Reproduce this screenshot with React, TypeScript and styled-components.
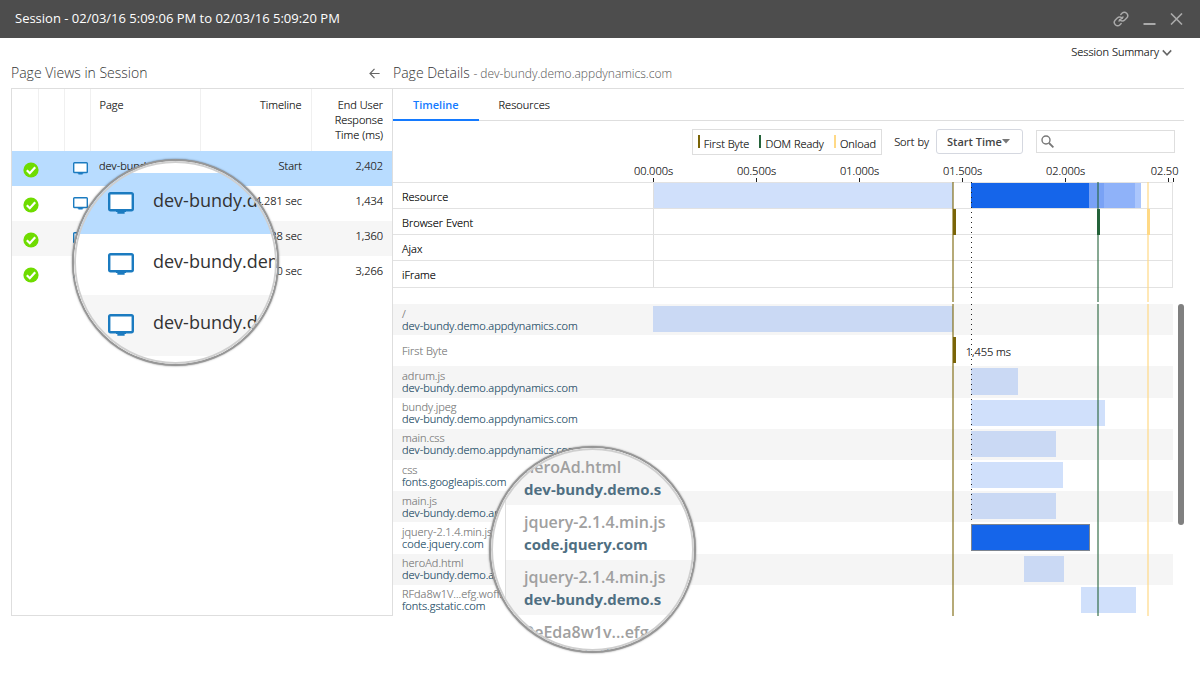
import React from "react";
import styled, { createGlobalStyle, css } from "styled-components";

const GlobalStyle = createGlobalStyle`
  *, *::before, *::after { box-sizing: border-box; }
  body {
    margin: 0;
    background: #fff;
    color: #333;
    font: 300 11px/15px "Open Sans", "Noto Sans", sans-serif;
    text-shadow: 0 0 0 currentColor;
  }
  button, input, select { font: inherit; color: inherit; text-shadow: inherit; }
`;

const Window = styled.div`
  position: relative;
  min-height: 100vh;
`;

const TitleBar = styled.header`
  display: flex;
  align-items: center;
  justify-content: space-between;
  height: 38px;
  padding: 0 17px 0 15px;
  background: #4d4d4d;
  color: #fff;
`;

const WindowTitle = styled.h1`
  margin: 0;
  padding-bottom: 2px;
  font-size: 13px;
  line-height: 18px;
  font-weight: 400;
  text-shadow: none;
`;

const WindowActions = styled.div`
  display: flex;
  align-items: center;
  gap: 14px;
`;

const IconButton = styled.button`
  display: flex;
  padding: 0;
  border: 0;
  background: none;
  color: #aaa;
`;

const SummaryBar = styled.div`
  display: flex;
  justify-content: flex-end;
  padding: 6px 28px 0 0;
`;

const SummaryButton = styled.button`
  display: flex;
  align-items: center;
  gap: 3px;
  padding: 0;
  border: 0;
  background: none;
  line-height: 16px;
`;

const Columns = styled.main`
  display: flex;
  padding: 4px 16px 0 11px;
`;

const ViewsColumn = styled.section`
  display: flex;
  flex-direction: column;
  flex: 0 0 381px;
`;

const DetailsColumn = styled.section`
  display: flex;
  flex-direction: column;
  flex: 1;
  min-width: 0;
`;

const PanelHead = styled.div`
  display: flex;
  align-items: center;
  justify-content: space-between;
  height: 24px;
  padding: 0 12px 6px 0;
  ${DetailsColumn} & { padding-left: 1px; }
`;

const PanelTitle = styled.h2`
  margin: 0;
  font-size: 14px;
  line-height: 18px;
  font-weight: 300;
  color: #333;
  text-shadow: none;
  white-space: nowrap;
`;

const PanelSubtitle = styled.span`
  font-size: 12px;
  color: #555;
`;

const ViewsPanel = styled.div`
  flex: 1;
  border: 1px solid #dedede;
  border-right-width: 0;
`;

const ViewsTable = styled.table`
  width: 100%;
  border-collapse: collapse;
  table-layout: fixed;
`;

const HeadCell = styled.th<{ $end?: boolean }>`
  height: 62px;
  padding: 8px 9px 0 9px;
  border-right: 1px solid #f0f0f0;
  font-weight: inherit;
  text-align: ${(p) => (p.$end ? "right" : "left")};
  vertical-align: top;
  &:last-child { border-right: 0; }
`;

const ViewRow = styled.tr<{ $selected?: boolean }>`
  background: ${(p) => (p.$selected ? "#b8dcff" : "#fff")};
  &:nth-child(3) { background: #f6f6f6; }
`;

const ViewCell = styled.td<{ $end?: boolean }>`
  height: 35px;
  padding: 7px 9px 0 9px;
  text-align: ${(p) => (p.$end ? "right" : "left")};
  vertical-align: top;
  white-space: nowrap;
  svg { display: block; }
`;

const StatusCell = styled(ViewCell)`
  padding: 11px 0 0 11px;
`;

const DeviceCell = styled(ViewCell)`
  padding: 11px 0 0 9px;
`;

const DetailsPanel = styled.div`
  border-top: 1px solid #dedede;
  border-left: 1px solid #dedede;
`;

const Tabs = styled.nav`
  display: flex;
  height: 32px;
  border-bottom: 1px solid #dedede;
`;

const Tab = styled.button<{ $active?: boolean }>`
  height: 32px;
  padding: 0 20px 2px;
  border: 0;
  background: none;
  ${(p) =>
    p.$active &&
    css`
      padding-bottom: 0;
      border-bottom: 2px solid #147aff;
      color: #147aff;
      font-weight: 600;
      text-shadow: none;
    `}
`;

const Toolbar = styled.div`
  display: flex;
  align-items: center;
  justify-content: flex-end;
  height: 43px;
  padding: 0 9px 2px 0;
`;

const Legend = styled.ul`
  display: flex;
  gap: 10px;
  height: 26px;
  margin: 0 12px 0 0;
  padding: 5px 5px 0;
  border: 1px solid #dedede;
  list-style: none;
`;

const LegendItem = styled.li<{ $color: string }>`
  display: flex;
  gap: 4px;
  line-height: 18px;
  &::before {
    content: "";
    width: 2px;
    height: 13px;
    background: ${(p) => p.$color};
  }
`;

const SortLabel = styled.label`
  display: flex;
  align-items: center;
  gap: 7px;
`;

const SelectBox = styled.span`
  display: flex;
  align-items: center;
  height: 25px;
  border: 1px solid #d5d8e0;
  border-radius: 3px;
  svg { margin: 0 12px 0 -9px; pointer-events: none; }
`;

const SortSelect = styled.select`
  height: 23px;
  padding: 0 9px 0 10px;
  border: 0;
  background: none;
  appearance: none;
  font-weight: 600;
  color: #444;
  text-shadow: none;
`;

const SearchBox = styled.label`
  display: flex;
  align-items: center;
  width: 139px;
  height: 23px;
  margin-left: 13px;
  padding: 0 4px;
  border: 1px solid #dedede;
`;

const SearchInput = styled.input`
  flex: 1;
  min-width: 0;
  border: 0;
  outline: 0;
  background: none;
`;

const LABEL_WIDTH = 260;

const Axis = styled.div`
  position: relative;
  height: 18px;
  margin: 0 11px 0 ${LABEL_WIDTH}px;
`;

const Tick = styled.div`
  position: absolute;
  bottom: 0;
  display: flex;
  flex-direction: column;
  align-items: center;
  width: 1px;
  white-space: nowrap;
  &::after {
    content: "";
    width: 1px;
    height: 4px;
    background: #222;
  }
`;

const TickLabel = styled.span<{ $last?: boolean }>`
  line-height: 14px;
  ${(p) => p.$last && "padding-right: 8px;"}
`;

const Overview = styled.div`
  position: relative;
  margin-right: 11px;
  padding-bottom: 14px;
`;

const OverviewTable = styled.div`
  border: 1px solid #e2e2e2;
  border-left: 0;
`;

const OverviewRow = styled.div`
  display: flex;
  height: 26px;
  &:not(:last-child) { border-bottom: 1px solid #e2e2e2; }
`;

const OverviewLabel = styled.div`
  flex: 0 0 ${LABEL_WIDTH}px;
  padding: 6px 9px;
  color: #222;
`;

const OverviewTrack = styled.div`
  position: relative;
  flex: 1;
  border-left: 1px solid #dedede;
`;

const ListArea = styled.div`
  display: flex;
  gap: 5px;
  padding-top: 2px;
`;

const ResourceList = styled.div`
  position: relative;
  display: grid;
  grid-auto-rows: 1fr;
  flex: 1;
  min-height: 312px;
`;

const ResourceRow = styled.div`
  display: flex;
  &:nth-child(odd) { background: #f5f5f5; }
`;

const ResourceLabel = styled.div`
  display: flex;
  flex-direction: column;
  justify-content: center;
  flex: 0 0 ${LABEL_WIDTH}px;
  padding: 0 9px;
  line-height: 12px;
  color: #8c8c8c;
  white-space: nowrap;
`;

const HostLink = styled.a`
  color: #3d6378;
  text-decoration: none;
`;

const ResourceTrack = styled.div`
  position: relative;
  flex: 1;
`;

const Bar = styled.span<{ $color: string; $inset?: boolean; $outline?: boolean }>`
  position: absolute;
  top: ${(p) => (p.$inset ? 2 : 0)}px;
  bottom: ${(p) => (p.$inset ? 3 : 0)}px;
  background: ${(p) => p.$color};
  ${(p) => p.$outline && "border: 1px solid #7d8590;"}
`;

const EventMark = styled.span<{ $color: string }>`
  position: absolute;
  top: 0;
  width: 3px;
  height: 26px;
  background: ${(p) => p.$color};
`;

const MarkText = styled.span`
  position: absolute;
  top: 9px;
`;

const GuideLayer = styled.div`
  position: absolute;
  inset: 0 0 0 ${LABEL_WIDTH}px;
  pointer-events: none;
`;

const Guide = styled.span<{ $color: string }>`
  position: absolute;
  top: 0;
  bottom: 0;
  width: 2px;
  background: ${(p) => p.$color};
`;

const DottedGuide = styled.span<{ $short?: boolean }>`
  position: absolute;
  top: 0;
  bottom: ${(p) => (p.$short ? 92 : 0)}px;
  width: 1px;
  background: repeating-linear-gradient(#222 0 1px, transparent 1px 5px);
`;

const ScrollThumb = styled.div`
  width: 6px;
  height: 221px;
  border-radius: 3px;
  background: #808080;
`;

const Lens = styled.aside<{ $left: number; $top: number }>`
  position: absolute;
  left: ${(p) => p.$left}px;
  top: ${(p) => p.$top}px;
  width: 207px;
  height: 207px;
  border: 2px solid #979797;
  border-radius: 50%;
  overflow: hidden;
  background: #fff;
  box-shadow: 0 0 2px rgba(0, 0, 0, 0.5);
  text-shadow: none;
  &::after {
    content: "";
    position: absolute;
    inset: 0;
    border: 2px solid #cfcfcf;
    border-radius: 50%;
  }
`;

const ViewsLensBody = styled.div`
  padding-top: 12px;
`;

const ViewsLensRow = styled.div<{ $color: string }>`
  display: flex;
  align-items: flex-start;
  gap: 19px;
  height: 61px;
  padding: 14px 0 0 34px;
  background: ${(p) => p.$color};
  color: #333;
  font-size: 18px;
  font-weight: 400;
  line-height: 26px;
  white-space: nowrap;
  svg { flex: none; margin-top: 5px; }
`;

const HostLensBody = styled.div`
  margin-left: 14px;
  border-left: 1px solid #dedede;
`;

const HostLensRow = styled.div<{ $first?: boolean }>`
  display: flex;
  flex-direction: column;
  height: ${(p) => (p.$first ? 57 : 55)}px;
  padding: ${(p) => (p.$first ? 8 : 6)}px 0 0 18px;
  font-size: 16px;
  line-height: 22px;
  font-weight: 600;
  color: #a0a0a0;
  white-space: nowrap;
  &:nth-child(odd) { background: #f5f5f5; }
`;

const LensHost = styled(HostLink)`
  color: #4f6f82;
  font-size: 15px;
  font-weight: 700;
`;

const CheckIcon = () => (
  <svg width="16" height="16" viewBox="0 0 16 16" aria-hidden="true">
    <circle cx="8" cy="8" r="7.6" fill="#6fdc00" />
    <path d="M3.8 8.2 6.8 11.2 12.2 5.2" fill="none" stroke="#fff" strokeWidth="2.2" />
  </svg>
);

const MonitorIcon = ({ size = 15 }: { size?: number }) => (
  <svg width={size} height={(size * 13) / 15} viewBox="0 0 15 13" aria-hidden="true">
    <rect x="0.7" y="0.7" width="13.6" height="9.8" rx="0.8" fill="#fff" stroke="#1b7bc0" strokeWidth="1.4" />
    <path d="M4.6 10.5h5.8v1.1H9.6v0.9H5.4v-0.9H4.6z" fill="#1b7bc0" />
  </svg>
);

const AXIS_END = 2.524;
const at = (seconds: number) => `${(seconds / AXIS_END) * 100}%`;

const pageViews = [
  { page: "dev-bundy.demo", start: "Start", time: "2,402" },
  { page: "dev-bundy.demo", start: "4.281 sec", time: "1,434" },
  { page: "dev-bundy.demo", start: "9.588 sec", time: "1,360" },
  { page: "dev-bundy.demo", start: "11.80 sec", time: "3,266" },
];

const ticks = [
  { t: 0, label: "00.000s" },
  { t: 0.5, label: "00.500s" },
  { t: 1, label: "01.000s" },
  { t: 1.5, label: "01.500s" },
  { t: 2, label: "02.000s" },
  { t: 2.5, label: "02.50" },
];

const overviewBars = [
  { from: 0, to: 1.455, color: "#d0e0fb" },
  { from: 1.543, to: 2.122, color: "#1565ea" },
  { from: 2.122, to: 2.192, color: "#79a2f5" },
  { from: 2.192, to: 2.343, color: "#8fb2f9" },
  { from: 2.343, to: 2.373, color: "#abc6fc" },
];

const events = [
  { name: "First Byte", t: 1.453, color: "#7a6407", soft: "rgba(122, 100, 7, 0.55)" },
  { name: "DOM Ready", t: 2.156, color: "#25633a", soft: "rgba(37, 99, 58, 0.55)" },
  { name: "Onload", t: 2.4, color: "#ffd986", soft: "rgba(255, 217, 134, 0.6)" },
];

const resources = [
  { name: "/", host: "dev-bundy.demo.appdynamics.com", from: 0, to: 1.455 },
  { name: "First Byte", mark: 1.455 },
  { name: "adrum.js", host: "dev-bundy.demo.appdynamics.com", from: 1.543, to: 1.772 },
  { name: "bundy.jpeg", host: "dev-bundy.demo.appdynamics.com", from: 1.543, to: 2.192 },
  { name: "main.css", host: "dev-bundy.demo.appdynamics.com", from: 1.543, to: 1.954 },
  { name: "css", host: "fonts.googleapis.com", from: 1.543, to: 1.99 },
  { name: "main.js", host: "dev-bundy.demo.appdynamics.com", from: 1.543, to: 1.954 },
  { name: "jquery-2.1.4.min.js", host: "code.jquery.com", from: 1.543, to: 2.122, slow: true },
  { name: "heroAd.html", host: "dev-bundy.demo.appdynamics.com", from: 1.8, to: 1.995 },
  { name: "RFda8w1V...efg.woff2", host: "fonts.gstatic.com", from: 2.076, to: 2.344 },
];

const Guides = ({ short }: { short?: boolean }) => (
  <GuideLayer>
    {events.map((e) => (
      <Guide key={e.name} $color={e.soft} style={{ left: at(e.t) }} />
    ))}
    <DottedGuide $short={short} style={{ left: at(1.543) }} />
  </GuideLayer>
);

export default function App() {
  return (
    <Window>
      <GlobalStyle />
      <TitleBar>
        <WindowTitle>Session - 02/03/16 5:09:06 PM to 02/03/16 5:09:20 PM</WindowTitle>
        <WindowActions>
          <IconButton aria-label="Copy link">
            <svg width="16" height="16" viewBox="0 0 24 24" fill="none" stroke="currentColor" strokeWidth="2.2" strokeLinecap="round">
              <path d="M10 13a5 5 0 0 0 7.54.54l3-3a5 5 0 0 0-7.07-7.07l-1.72 1.71" />
              <path d="M14 11a5 5 0 0 0-7.54-.54l-3 3a5 5 0 0 0 7.07 7.07l1.71-1.71" />
              <path d="M9 15l6-6" />
            </svg>
          </IconButton>
          <IconButton aria-label="Minimize">
            <svg width="13" height="12" viewBox="0 0 13 12">
              <path d="M0.5 11h12" stroke="currentColor" strokeWidth="2" />
            </svg>
          </IconButton>
          <IconButton aria-label="Close">
            <svg width="13" height="12" viewBox="0 0 13 12">
              <path d="M1 0.5 12 11.5M12 0.5 1 11.5" stroke="currentColor" strokeWidth="1.6" />
            </svg>
          </IconButton>
        </WindowActions>
      </TitleBar>

      <SummaryBar>
        <SummaryButton>
          Session Summary
          <svg width="10" height="7" viewBox="0 0 10 7" aria-hidden="true">
            <path d="M0.8 1.4 5 5.8 9.2 1.4" fill="none" stroke="#666" strokeWidth="1.6" />
          </svg>
        </SummaryButton>
      </SummaryBar>

      <Columns>
        <ViewsColumn>
          <PanelHead>
            <PanelTitle>Page Views in Session</PanelTitle>
            <IconButton aria-label="Collapse">
              <svg width="11" height="11" viewBox="0 0 11 11">
                <path d="M5.5 0.8 1 5.5 5.5 10.2M1 5.5H10.6" fill="none" stroke="#666" strokeWidth="1.2" />
              </svg>
            </IconButton>
          </PanelHead>
          <ViewsPanel>
            <ViewsTable>
              <colgroup>
                <col width="26" />
                <col width="26" />
                <col width="26" />
                <col width="110" />
                <col width="111" />
                <col />
              </colgroup>
              <thead>
                <tr>
                  <HeadCell />
                  <HeadCell />
                  <HeadCell />
                  <HeadCell>Page</HeadCell>
                  <HeadCell $end>Timeline</HeadCell>
                  <HeadCell $end>End User Response Time (ms)</HeadCell>
                </tr>
              </thead>
              <tbody>
                {pageViews.map((v, i) => (
                  <ViewRow key={v.time} $selected={i === 0}>
                    <StatusCell colSpan={2}><CheckIcon /></StatusCell>
                    <DeviceCell><MonitorIcon /></DeviceCell>
                    <ViewCell>{v.page}</ViewCell>
                    <ViewCell $end>{v.start}</ViewCell>
                    <ViewCell $end>{v.time}</ViewCell>
                  </ViewRow>
                ))}
              </tbody>
            </ViewsTable>
          </ViewsPanel>
        </ViewsColumn>

        <DetailsColumn>
          <PanelHead>
            <PanelTitle>
              Page Details <PanelSubtitle>- dev-bundy.demo.appdynamics.com</PanelSubtitle>
            </PanelTitle>
          </PanelHead>
          <DetailsPanel>
            <Tabs>
              <Tab $active>Timeline</Tab>
              <Tab>Resources</Tab>
            </Tabs>
            <Toolbar>
              <Legend>
                {events.map((e) => (
                  <LegendItem key={e.name} $color={e.color}>{e.name}</LegendItem>
                ))}
              </Legend>
              <SortLabel>
                Sort by
                <SelectBox>
                  <SortSelect>
                    <option>Start Time</option>
                  </SortSelect>
                  <svg width="8" height="5" viewBox="0 0 8 5" aria-hidden="true">
                    <path d="M0 0h8L4 4.6z" fill="#777" />
                  </svg>
                </SelectBox>
              </SortLabel>
              <SearchBox>
                <svg width="13" height="13" viewBox="0 0 13 13" aria-hidden="true">
                  <circle cx="5" cy="5" r="4" fill="none" stroke="#777" strokeWidth="1.4" />
                  <path d="M8 8 12.4 12.4" stroke="#777" strokeWidth="1.8" />
                </svg>
                <SearchInput type="search" aria-label="Search resources" />
              </SearchBox>
            </Toolbar>
            <Axis>
              {ticks.map((t) => (
                <Tick key={t.label} style={{ left: at(t.t) }}>
                  <TickLabel $last={t.t === 2.5}>{t.label}</TickLabel>
                </Tick>
              ))}
              <Tick style={{ left: at(AXIS_END) }} />
            </Axis>
            <Overview>
              <OverviewTable>
                <OverviewRow>
                  <OverviewLabel>Resource</OverviewLabel>
                  <OverviewTrack>
                    {overviewBars.map((b) => (
                      <Bar key={b.from} $color={b.color} style={{ left: at(b.from), width: at(b.to - b.from) }} />
                    ))}
                  </OverviewTrack>
                </OverviewRow>
                <OverviewRow>
                  <OverviewLabel>Browser Event</OverviewLabel>
                  <OverviewTrack>
                    {events.map((e) => (
                      <EventMark key={e.name} $color={e.color} style={{ left: at(e.t + 0.003) }} />
                    ))}
                  </OverviewTrack>
                </OverviewRow>
                <OverviewRow>
                  <OverviewLabel>Ajax</OverviewLabel>
                  <OverviewTrack />
                </OverviewRow>
                <OverviewRow>
                  <OverviewLabel>iFrame</OverviewLabel>
                  <OverviewTrack />
                </OverviewRow>
              </OverviewTable>
              <Guides />
            </Overview>
            <ListArea>
              <ResourceList>
                {resources.map((r, i) => (
                  <ResourceRow key={r.name}>
                    <ResourceLabel>
                      <span>{r.name}</span>
                      {r.host && <HostLink href="#">{r.host}</HostLink>}
                    </ResourceLabel>
                    <ResourceTrack>
                      {r.mark !== undefined ? (
                        <>
                          <EventMark $color="#7a6407" style={{ left: at(r.mark), top: 2 }} />
                          <MarkText style={{ left: at(r.mark + 0.063) }}>1,455 ms</MarkText>
                        </>
                      ) : (
                        <Bar
                          $inset
                          $outline={r.slow}
                          $color={r.slow ? "#1565ea" : i % 2 ? "#d0e0fb" : "#cad9f4"}
                          style={{ left: at(r.from!), width: at(r.to! - r.from!) }}
                        />
                      )}
                    </ResourceTrack>
                  </ResourceRow>
                ))}
                <Guides short />
              </ResourceList>
              <ScrollThumb />
            </ListArea>
          </DetailsPanel>
        </DetailsColumn>
      </Columns>

      <Lens $left={72} $top={159}>
        <ViewsLensBody>
          {["#b8dcff", "#fff", "#f6f6f6"].map((color) => (
            <ViewsLensRow key={color} $color={color}>
              <MonitorIcon size={26} />
              dev-bundy.demo
            </ViewsLensRow>
          ))}
        </ViewsLensBody>
      </Lens>

      <Lens $left={489} $top={446}>
        <HostLensBody>
          <HostLensRow $first>heroAd.html<LensHost href="#">dev-bundy.demo.s</LensHost></HostLensRow>
          <HostLensRow>jquery-2.1.4.min.js<LensHost href="#">code.jquery.com</LensHost></HostLensRow>
          <HostLensRow>jquery-2.1.4.min.js<LensHost href="#">dev-bundy.demo.s</LensHost></HostLensRow>
          <HostLensRow>ReEda8w1v...efg<LensHost href="#">fonts.gstatic.com</LensHost></HostLensRow>
        </HostLensBody>
      </Lens>
    </Window>
  );
}
